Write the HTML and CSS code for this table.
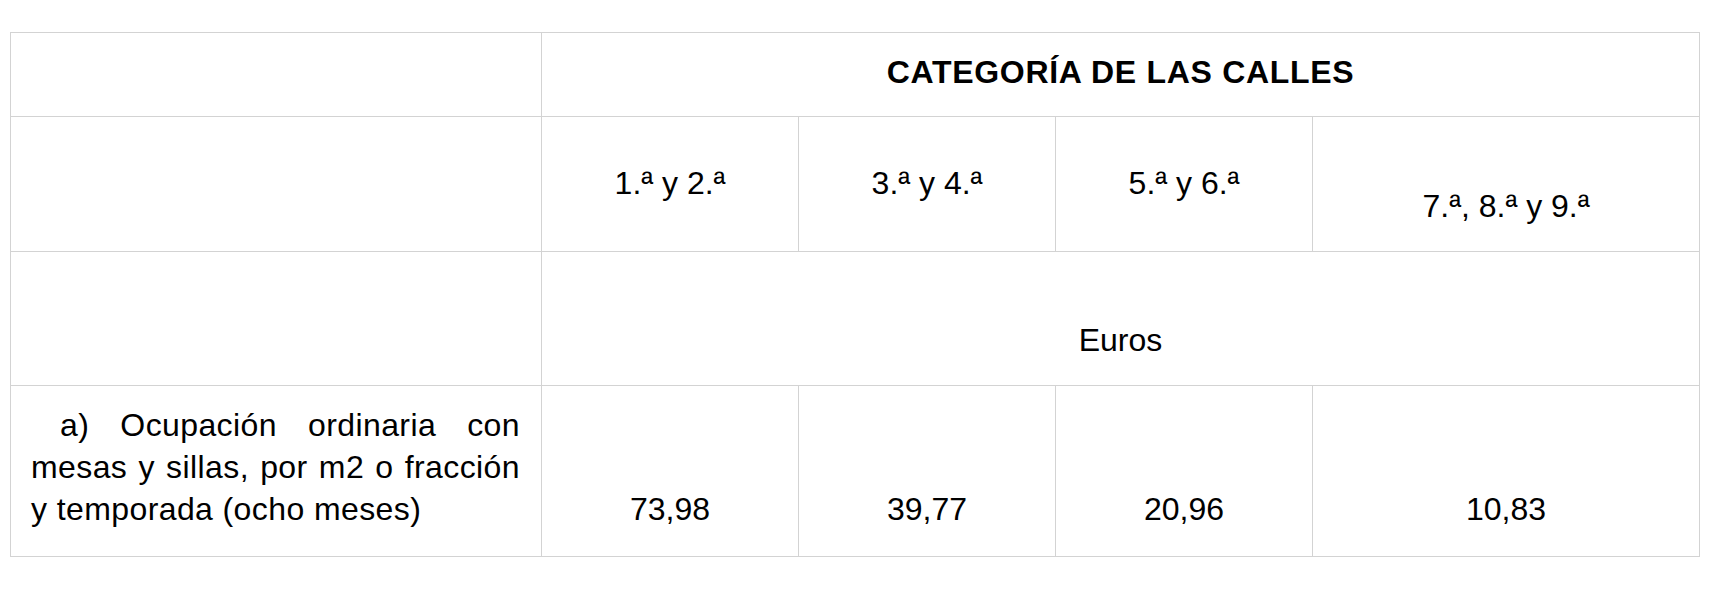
FILE: index.html
```html
<!DOCTYPE html>
<html lang="es">
<head>
<meta charset="utf-8">
<title>Categoría de las calles</title>
<link rel="stylesheet" href="styles.css">
</head>
<body>
<table class="tarifas">
  <colgroup>
    <col class="c-concepto">
    <col class="c-cat">
    <col class="c-cat">
    <col class="c-cat">
    <col class="c-last">
  </colgroup>
  <tr class="r-head">
    <td></td>
    <td colspan="4" class="head">CATEGORÍA DE LAS CALLES</td>
  </tr>
  <tr class="r-cats">
    <td></td>
    <td class="mid">1.ª y 2.ª</td>
    <td class="mid">3.ª y 4.ª</td>
    <td class="mid">5.ª y 6.ª</td>
    <td class="bottom">7.ª, 8.ª y 9.ª</td>
  </tr>
  <tr class="r-unit">
    <td></td>
    <td colspan="4" class="bottom">Euros</td>
  </tr>
  <tr class="r-data">
    <td class="concepto">a) Ocupación ordinaria con mesas y sillas, por m2 o fracción y temporada (ocho meses)</td>
    <td class="bottom num">73,98</td>
    <td class="bottom num">39,77</td>
    <td class="bottom num">20,96</td>
    <td class="bottom num">10,83</td>
  </tr>
</table>
</body>
</html>
```
FILE: styles.css
```css
html, body {
  margin: 0;
  padding: 0;
  background: #ffffff;
}

body {
  padding: 32px 0 0 10px;
}

.tarifas {
  border-collapse: collapse;
  table-layout: fixed;
  width: 1689px;
  font-family: "Liberation Sans", Arial, Helvetica, sans-serif;
  font-size: 32px;
  line-height: 42px;
  color: #000000;
}

.c-concepto { width: 531px; }
.c-cat { width: 257px; }
.c-last { width: 387px; }

.tarifas td {
  border: 1px solid #d3d3d3;
  padding: 0 22px;
  text-align: center;
  vertical-align: middle;
}

.r-head { height: 84px; }
.r-cats { height: 135px; }
.r-unit { height: 134px; }
.r-data { height: 171px; }

.tarifas td.head {
  font-weight: bold;
  letter-spacing: 0.7px;
  padding-bottom: 5px;
}

.tarifas td.mid {
  vertical-align: middle;
  padding-bottom: 3px;
}

.tarifas td.bottom {
  vertical-align: bottom;
  padding-bottom: 24px;
}

.tarifas td.num {
  padding-bottom: 26px;
}

.tarifas td.concepto {
  vertical-align: top;
  text-align: justify;
  text-indent: 29px;
  letter-spacing: 0.4px;
  padding: 18px 21px 26px 20px;
}
```
